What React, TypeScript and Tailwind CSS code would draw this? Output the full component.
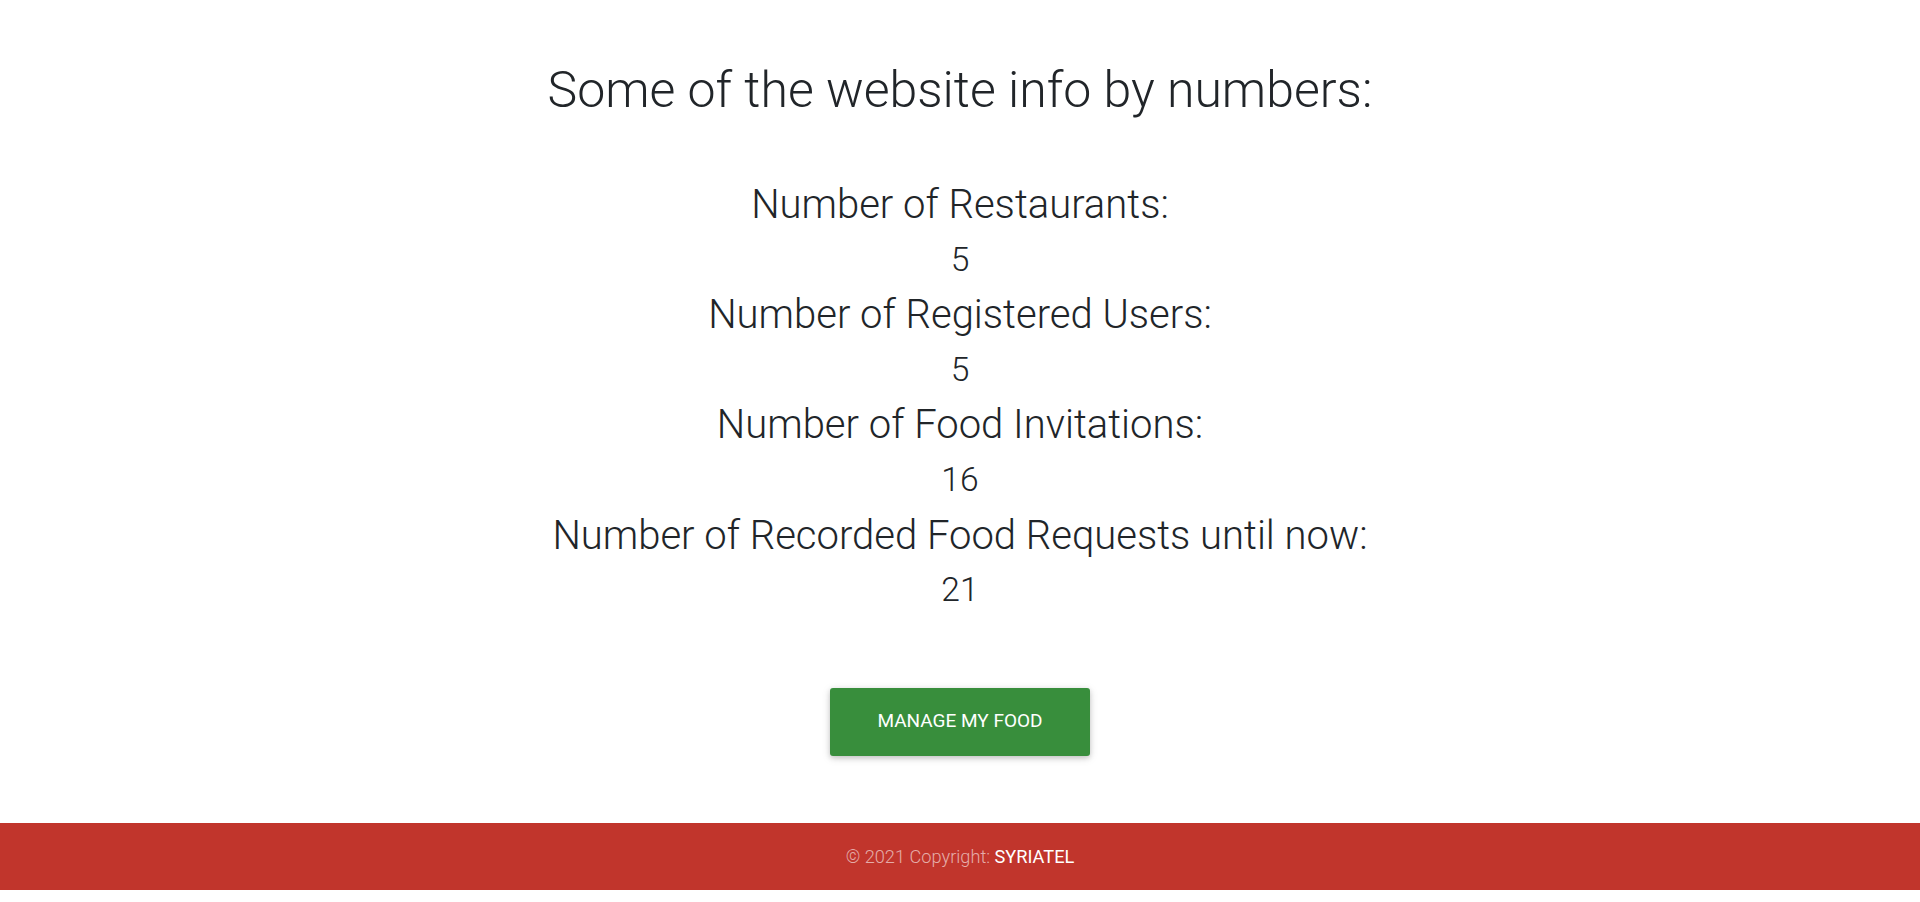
import React from "react";

const stats = [
  { label: "Number of Restaurants:", value: "5" },
  { label: "Number of Registered Users:", value: "5" },
  { label: "Number of Food Invitations:", value: "16" },
  { label: "Number of Recorded Food Requests until now:", value: "21" },
];

export default function App() {
  return (
    <div className="min-h-[902px] bg-white font-['Roboto',sans-serif] text-[#212529] flex flex-col">
      <main className="flex flex-col items-center pt-[60px]">
        <h1 className="text-[50px] leading-[60px] font-light m-0">Some of the website info by numbers:</h1>
        <div className="mt-[61px] flex flex-col items-center">
          {stats.map((s) => (
            <React.Fragment key={s.label}>
              <h3 className="text-[40px] leading-[47.5px] font-light mb-[11.2px]">{s.label}</h3>
              <h4 className="text-[33.6px] leading-[40.3px] font-light mb-[11.2px]">{s.value}</h4>
            </React.Fragment>
          ))}
        </div>
        <button className="mt-[66px] w-[260px] h-[68px] rounded-[3px] bg-[#388e3c] text-white uppercase text-[19px] font-normal shadow-[0_2px_5px_0_rgba(0,0,0,0.16),0_2px_10px_0_rgba(0,0,0,0.12)]">
          Manage my food
        </button>
      </main>
      <footer className="mt-[67px] h-[67px] bg-[#c1352c] flex items-center justify-center text-[18.2px] font-light">
        <span className="text-white/60">© 2021 Copyright:&nbsp;</span>
        <span className="text-white font-normal">SYRIATEL</span>
      </footer>
    </div>
  );
}
